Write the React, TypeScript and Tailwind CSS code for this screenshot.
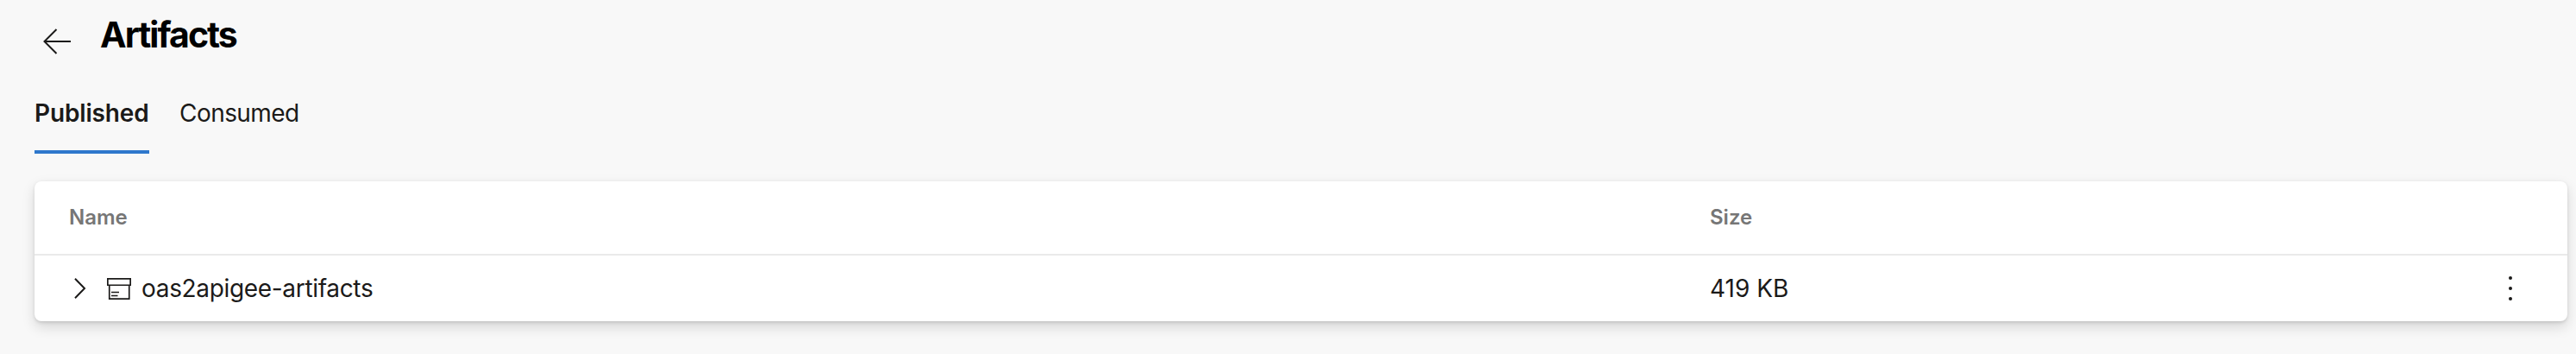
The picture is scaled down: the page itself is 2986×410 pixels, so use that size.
const ink = "#1b1a19";

function BackIcon() {
  return (
    <svg className="mt-[32px] ml-[10px] h-[32px] w-[34px] shrink-0" viewBox="0 0 34 32" fill="none" stroke={ink} strokeWidth="2">
      <path d="M32 16H2M15.5 2L1.5 16L15.5 30" />
    </svg>
  );
}

function ChevronIcon() {
  return (
    <svg className="h-[24px] w-[14px] shrink-0" viewBox="0 0 14 24" fill="none" stroke={ink} strokeWidth="2">
      <path d="M1 0.8L12 12L1 23.2" />
    </svg>
  );
}

function ArtifactIcon() {
  return (
    <svg className="ml-[24px] h-[25px] w-[28px] shrink-0" viewBox="0 0 28 25" fill="none" stroke={ink} strokeWidth="1.7">
      <path d="M0.85 0.85H27.15V8.25H0.85ZM2.75 8.25V24.15H25.75V8.25M5 16.5H14M5 20.5H12.5" />
    </svg>
  );
}

function MoreIcon() {
  return (
    <svg className="mr-[64px] h-[28px] w-[4px] shrink-0" viewBox="0 0 4 28" fill={ink}>
      <circle cx="2" cy="2" r="2" />
      <circle cx="2" cy="14" r="2" />
      <circle cx="2" cy="26" r="2" />
    </svg>
  );
}

export default function App() {
  return (
    <main className="h-[410px] w-[2986px] overflow-hidden bg-[#f8f8f8] pl-[40px] pr-[10px] font-['Inter',sans-serif] text-[#1b1a19]">
      <header className="flex h-[96px] items-start">
        <BackIcon />
        <h1 className="mt-[16px] ml-[32px] text-[41px] leading-[48px] font-bold tracking-[-1.94px] whitespace-nowrap text-black">Artifacts</h1>
      </header>
      <nav className="flex h-[82px] gap-[35px] text-[28px] leading-[36px]">
        <button className="w-[133px] border-b-4 border-[#2f78cc] pb-[8px] text-left font-semibold tracking-[-0.15px] whitespace-nowrap">Published</button>
        <button className="border-b-4 border-transparent pb-[8px] text-left tracking-[-0.55px] whitespace-nowrap">Consumed</button>
      </nav>
      <section className="mt-[32px] h-[162px] rounded-[8px] bg-white shadow-[0_6.4px_14.4px_rgba(0,0,0,0.132),0_1.2px_3.6px_rgba(0,0,0,0.108)]">
        <div className="flex h-[86px] items-center border-b-2 border-[#eaeaea] text-[24px] leading-[32px] font-semibold text-[#767676]">
          <div className="w-[1942px] pl-[40px]">Name</div>
          <div>Size</div>
        </div>
        <div className="flex h-[76px] items-center text-[28px] leading-[36px]">
          <div className="flex w-[1942px] items-center pl-[46px]">
            <ChevronIcon />
            <ArtifactIcon />
            <span className="ml-[12px] tracking-[-0.33px] whitespace-nowrap">oas2apigee-artifacts</span>
          </div>
          <div className="flex-1">419 KB</div>
          <MoreIcon />
        </div>
      </section>
    </main>
  );
}
